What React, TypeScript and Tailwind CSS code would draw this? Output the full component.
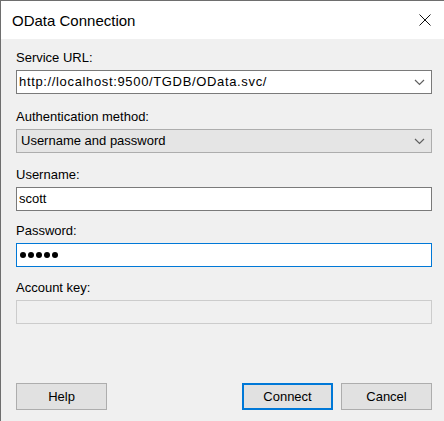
import React from "react";

const Chevron = () => (
  <svg width="11" height="7" viewBox="0 0 11 7" className="shrink-0">
    <path d="M1 1 L5.5 5.5 L10 1" fill="none" stroke="#606060" strokeWidth="1.2" />
  </svg>
);

export default function App() {
  const font = { fontFamily: '"Liberation Sans", Arial, sans-serif' };
  return (
    <div className="w-[444px] h-[421px] bg-[#f0f0f0] border-l border-t border-[#6e6e6e] flex flex-col text-black" style={font}>
      <div className="h-[38px] bg-white flex items-center justify-between pl-[11px] pr-[13px] shrink-0">
        <span className="text-[15px] leading-none mt-[1px]">OData Connection</span>
        <svg width="12" height="12" viewBox="0 0 12 12" className="mr-[0px]">
          <path d="M0.5 0.5 L11.5 11.5 M11.5 0.5 L0.5 11.5" stroke="#111" strokeWidth="1" />
        </svg>
      </div>
      <div className="flex flex-col pl-[15px] pr-[12px] pt-[10px] text-[13px]">
        <div className="h-[18px] leading-[18px]">Service URL:</div>
        <div className="mt-[3px] h-[24px] bg-white border border-[#7a7a7a] flex items-center justify-between pl-[2px] pr-[6px]">
          <span className="tracking-[0.65px]">http://localhost:9500/TGDB/OData.svc/</span>
          <Chevron />
        </div>

        <div className="mt-[14px] h-[18px] leading-[18px]">Authentication method:</div>
        <div className="mt-[3px] h-[24px] bg-[#e5e5e5] border border-[#adadad] flex items-center justify-between pl-[4px] pr-[6px]">
          <span>Username and password</span>
          <Chevron />
        </div>

        <div className="mt-[13px] h-[18px] leading-[18px]">Username:</div>
        <div className="mt-[3px] h-[24px] bg-white border border-[#7a7a7a] flex items-center pl-[2px]">
          <span>scott</span>
        </div>

        <div className="mt-[11px] h-[18px] leading-[18px]">Password:</div>
        <div className="mt-[3px] h-[24px] bg-white border border-[#0078d7] flex items-center pl-[3px] gap-[2px]">
          <span className="w-[6px] h-[6px] rounded-full bg-black" />
          <span className="w-[6px] h-[6px] rounded-full bg-black" />
          <span className="w-[6px] h-[6px] rounded-full bg-black" />
          <span className="w-[6px] h-[6px] rounded-full bg-black" />
          <span className="w-[6px] h-[6px] rounded-full bg-black" />
        </div>

        <div className="mt-[12px] h-[18px] leading-[18px]">Account key:</div>
        <div className="mt-[3px] h-[24px] bg-[#f0f0f0] border border-[#cccccc]" />

        <div className="mt-[59px] flex items-center">
          <button className="w-[91px] h-[27px] bg-[#e1e1e1] border border-[#adadad] text-[13px]">Help</button>
          <div className="flex-1" />
          <button className="w-[91px] h-[27px] bg-[#e1e1e1] border-2 border-[#0078d7] text-[13px]">Connect</button>
          <button className="ml-[8px] w-[91px] h-[27px] bg-[#e1e1e1] border border-[#adadad] text-[13px]">Cancel</button>
        </div>
      </div>
    </div>
  );
}
